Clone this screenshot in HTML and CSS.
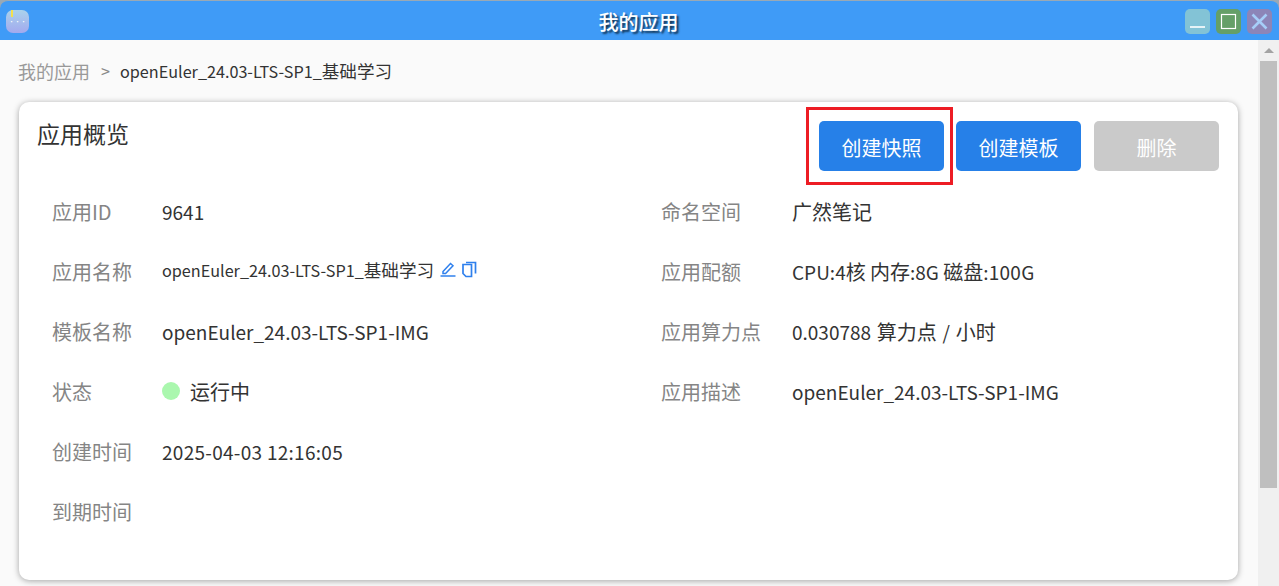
FILE: index.html
```html
<!DOCTYPE html>
<html lang="zh">
<head>
<meta charset="utf-8">
<title>我的应用</title>
<link rel="stylesheet" href="styles.css">
</head>
<body>
<div class="window">
  <header class="titlebar">
    <div class="app-icon"><span class="app-mark"></span><span class="app-dots">•••</span></div>
    <div class="title">我的应用</div>
    <div class="controls">
      <div class="ctl ctl-min"><svg width="25" height="25" viewBox="0 0 25 25"><path d="M5 18h15" stroke="#fff" stroke-width="1.6"/></svg></div>
      <div class="ctl ctl-max"><svg width="25" height="25" viewBox="0 0 25 25"><rect x="5.5" y="5.5" width="14" height="14" fill="none" stroke="#fff" stroke-width="1.2"/></svg></div>
      <div class="ctl ctl-close"><svg width="25" height="25" viewBox="0 0 25 25"><path d="M5.5 5.5l14 14M19.5 5.5l-14 14" stroke="#a6cdf8" stroke-width="2.6"/></svg></div>
    </div>
  </header>
  <div class="body">
    <main class="content">
      <nav class="crumbs"><span class="crumb-link">我的应用</span><span class="crumb-sep">&gt;</span><span class="crumb-cur">openEuler_24.03-LTS-SP1_<span class="cn-18">基础学习</span></span></nav>
      <section class="card">
        <div class="card-head">
          <h2 class="card-title">应用概览</h2>
          <div class="actions">
            <button class="btn btn-primary">创建快照</button>
            <button class="btn btn-primary">创建模板</button>
            <button class="btn btn-disabled">删除</button>
          </div>
        </div>
        <div class="info">
          <div class="col col-left">
            <div class="row"><span class="label">应用ID</span><span class="value">9641</span></div>
            <div class="row"><span class="label">应用名称</span><span class="value value-small"><span>openEuler_24.03-LTS-SP1_<span class="cn-18">基础学习</span></span>
              <svg class="ico ico-edit" width="16" height="16" viewBox="0 0 16 16"><path d="M3 10.5L10.5 2.5l2.5 2.3L5.6 12.6H3z" fill="none" stroke="#2f80ed" stroke-width="1.5"/><path d="M0.5 15h15" stroke="#2f80ed" stroke-width="1.5"/></svg>
              <svg class="ico ico-copy" width="15" height="17" viewBox="0 0 15 17"><path d="M4 1.5h9.5v11" fill="none" stroke="#2f80ed" stroke-width="1.7"/><path d="M1 3.5h8.5v12H4L1 12.5z" fill="none" stroke="#2f80ed" stroke-width="1.7"/></svg>
            </span></div>
            <div class="row"><span class="label">模板名称</span><span class="value">openEuler_24.03-LTS-SP1-IMG</span></div>
            <div class="row"><span class="label">状态</span><span class="value status"><i class="dot"></i><span class="cn">运行中</span></span></div>
            <div class="row"><span class="label">创建时间</span><span class="value num-wide">2025-04-03 12:16:05</span></div>
            <div class="row"><span class="label">到期时间</span><span class="value"></span></div>
          </div>
          <div class="col col-right">
            <div class="row"><span class="label">命名空间</span><span class="value cn">广然笔记</span></div>
            <div class="row"><span class="label">应用配额</span><span class="value">CPU:4<span class="cn">核</span> <span class="cn">内存</span>:8G <span class="cn">磁盘</span><span class="num-wide">:100G</span></span></div>
            <div class="row"><span class="label">应用算力点</span><span class="value spaced">0.030788 <span class="cn">算力点</span> / <span class="cn">小时</span></span></div>
            <div class="row"><span class="label">应用描述</span><span class="value">openEuler_24.03-LTS-SP1-IMG</span></div>
          </div>
        </div>
        <div class="highlight"></div>
      </section>
    </main>
    <aside class="scrollbar">
      <div class="scroll-up"><i class="arrow"></i></div>
      <div class="thumb"></div>
    </aside>
  </div>
</div>
</body>
</html>
```
FILE: styles.css
```css
* { box-sizing: border-box; }
html, body { margin: 0; padding: 0; height: 100%; overflow: hidden; }
body {
  font-family: "Noto Sans CJK SC", "Noto Sans", sans-serif;
  background: #fafafa;
  color: #333;
}
.window { height: 586px; display: flex; flex-direction: column; background: #9aa9b5; }
.titlebar {
  height: 40px;
  flex: none;
  display: flex;
  align-items: center;
  padding: 2px 7px 0 6px;
  background: #3f9bf7;
  border-radius: 8px 8px 0 0;
  border-top: 1px solid #9aa9b5;
  position: relative;
}
.app-icon {
  width: 23px; height: 23px;
  border-radius: 7px;
  background: linear-gradient(#a9d2ec, #a3a9ee);
  position: relative;
  display: flex; align-items: center; justify-content: center;
  color: #fff;
  font-size: 6px;
  line-height: 1;
}
.app-mark { position: absolute; left: 5px; top: 0; width: 2px; height: 7px; background: #f4e04d; }
.title {
  position: absolute; left: 0; right: 0; top: 0; bottom: 0;
  display: flex; align-items: center; justify-content: center;
  color: #fff;
  font-size: 20px;
  font-weight: 500;
  text-shadow: 2px 2px 2px #12324f;
  padding: 2px 2px 0 0;
}
.controls { margin-left: auto; display: flex; gap: 6px; position: relative; }
.ctl { width: 25px; height: 25px; border-radius: 5px; display: flex; align-items: center; justify-content: center; }
.ctl-min { background: #83c3d6; }
.ctl-max { background: #659f68; }
.ctl-close { background: #8c85b8; }
.body { flex: 1; min-height: 0; display: flex; background: #fafafa; }
.content { flex: 1; min-width: 0; padding: 0 20px 0 19px; }
.crumbs { height: 62px; display: flex; align-items: center; font-size: 16.2px; color: #333; padding-bottom: 1px; }
.crumb-link { color: #999; font-size: 18px; margin-left: -1px; }
.crumb-sep { color: #888; margin: 0 10px 0 11px; }
.cn-18 { font-size: 17.6px; }
.card {
  height: 478px;
  background: #fff;
  border-radius: 10px;
  box-shadow: 0 1px 6px rgba(0,0,0,.35);
  padding: 19px 19px 0 18px;
  position: relative;
}
.card-head { display: flex; justify-content: space-between; height: 60px; }
.card-title { margin: -4px 0 0; font-size: 23px; font-weight: 400; line-height: 32px; color: #333; }
.actions { display: flex; gap: 12px; }
.btn {
  width: 125px; height: 50px;
  border: 0; border-radius: 5px;
  font: inherit; font-size: 20px;
  color: #fff;
  padding: 2px 0 0;
}
.btn-disabled { margin-left: 1px; background: #cacaca; }
.btn-primary { background: #2680e8; }
.info { display: flex; padding-left: 15px; }
.col-left { width: 609px; }
.col-right { flex: 1; }
.row { height: 60px; display: flex; align-items: center; font-size: 20px; }
.label { color: #858585; }
.col-left .label { width: 110px; }
.col-right .label { width: 131px; }
.value { color: #333; white-space: nowrap; font-size: 19px; }
.cn { font-size: 20px; }
.num-wide { letter-spacing: .28px; }
.spaced { word-spacing: 1.5px; }
.value-small { font-size: 16.2px; display: flex; align-items: center; gap: 6px; margin-top: -4px; }
.ico { flex: none; }
.status { display: flex; align-items: center; gap: 10px; }
.dot { width: 18px; height: 18px; border-radius: 50%; background: #aaf7ae; }
.highlight {
  position: absolute;
  left: 787px; top: 5px;
  width: 147px; height: 78px;
  border: 3px solid #ed1c24;
}
.scrollbar { width: 21px; flex: none; background: #f0f0f0; padding: 0 2px; }
.scroll-up { height: 21px; display: flex; align-items: center; justify-content: center; }
.arrow { width: 0; height: 0; border-left: 5px solid transparent; border-right: 5px solid transparent; border-bottom: 5px solid #a3a3a3; }
.thumb { height: 427px; background: #bfbfbf; }
```
